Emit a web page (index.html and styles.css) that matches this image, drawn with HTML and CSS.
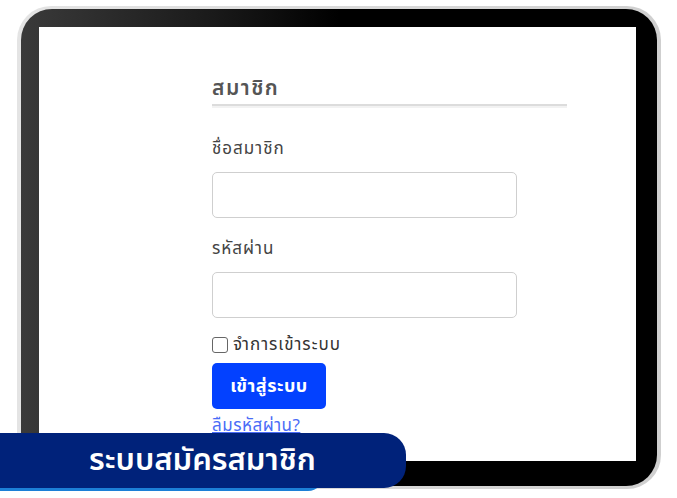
FILE: index.html
```html
<!DOCTYPE html>
<html lang="th">
<head>
<meta charset="utf-8">
<link rel="stylesheet" href="styles.css">
</head>
<body>
<div class="page">
  <div class="frame">
    <div class="bezel">
      <div class="screen">
        <form class="login">
          <h2 class="title">สมาชิก</h2>
          <label class="label" for="u">ชื่อสมาชิก</label>
          <input class="input" id="u" type="text">
          <label class="label" for="p">รหัสผ่าน</label>
          <input class="input" id="p" type="password">
          <label class="remember"><span class="box"></span>จำการเข้าระบบ</label>
          <button class="btn" type="button">เข้าสู่ระบบ</button>
          <a class="forgot" href="#">ลืมรหัสผ่าน?</a>
        </form>
      </div>
    </div>
  </div>
  <div class="banner-line"></div>
  <div class="banner">ระบบสมัครสมาชิก</div>
</div>
</body>
</html>
```
FILE: styles.css
```css
* { box-sizing: border-box; }
html, body { margin: 0; padding: 0; }
body {
  width: 677px;
  height: 498px;
  overflow: hidden;
  background: #fff;
  font-family: "Noto Sans Thai", "Noto Sans", sans-serif;
}
.page {
  position: relative;
  width: 677px;
  height: 498px;
  padding: 6px 0 0 17px;
}
.frame {
  width: 644px;
  height: 483px;
  padding: 3px 4px 3px 4px;
  border-radius: 34px;
  background: linear-gradient(90deg, #e4e4e4, #cfcfcf);
}
.bezel {
  height: 100%;
  padding: 18px 21px 25px 18px;
  border-radius: 31px;
  background: linear-gradient(90deg, #3a3a3a 0%, #1a1a1a 30%, #000 50%, #000 100%);
}
.screen {
  height: 100%;
  background: #fff;
  padding: 47px 0 0 173px;
  overflow: hidden;
}
.login {
  width: 355px;
  display: flex;
  flex-direction: column;
  align-items: flex-start;
}
.title {
  margin: 0;
  width: 100%;
  font-size: 21px;
  font-weight: 600;
  letter-spacing: 1.5px;
  color: #555;
  line-height: 30px;
  border-bottom: 2px solid #dcdcdc;
  box-shadow: 0 2px 0 #f2f2f2;
}
.label {
  margin-top: 32px;
  font-size: 17px;
  letter-spacing: 1px;
  color: #444;
  line-height: 22px;
}
.input {
  margin-top: 12px;
  width: 305px;
  height: 46px;
  border: 1.5px solid #cfcfcf;
  border-radius: 5px;
  background: #fff;
}
.input + .label { margin-top: 20px; }
.remember {
  margin-top: 17px;
  display: flex;
  align-items: center;
  font-size: 17px;
  letter-spacing: 1px;
  color: #333;
  line-height: 20px;
}
.box {
  width: 16px;
  height: 16px;
  border: 1.5px solid #666;
  border-radius: 3px;
  margin-right: 5px;
}
.btn {
  margin-top: 8px;
  width: 114px;
  height: 46px;
  border: 0;
  border-radius: 5px;
  background: #0341ff;
  color: #fff;
  font-family: inherit;
  font-size: 18px;
  font-weight: 700;
  letter-spacing: 0.5px;
}
.forgot {
  margin-top: 7px;
  font-size: 17px;
  letter-spacing: 0.5px;
  color: #4a6cf7;
  text-decoration: underline;
  line-height: 20px;
}
.banner-line {
  position: absolute;
  left: 0;
  top: 436px;
  width: 324px;
  height: 55px;
  background: #1c7fd6;
  border-radius: 0 16px 16px 0;
}
.banner {
  position: absolute;
  left: 0;
  top: 433px;
  width: 406px;
  height: 55px;
  background: #00227a;
  border-radius: 0 22px 22px 0;
  color: #fff;
  font-size: 31px;
  font-weight: 600;
  line-height: 55px;
  padding-left: 89px;
  white-space: nowrap;
}
```
